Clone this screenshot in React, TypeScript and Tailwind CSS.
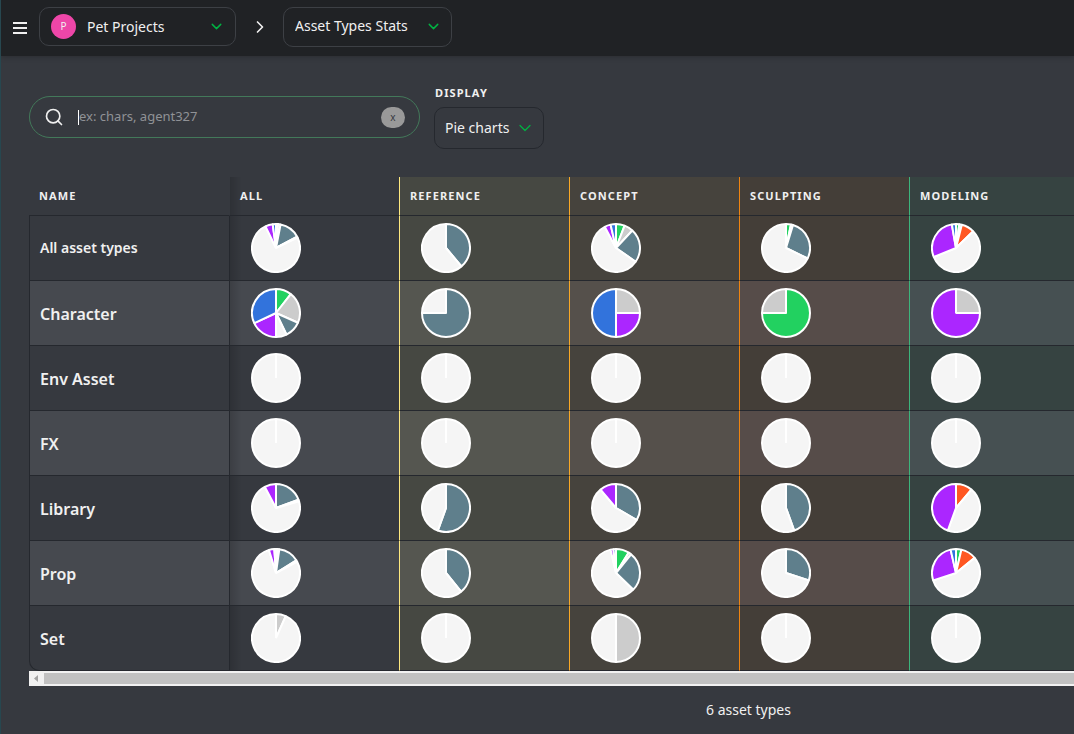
import { ReactNode } from 'react';
import { ChevronDown, ChevronRight, Search } from 'lucide-react';

type Slice = [color: string, degrees: number];

interface Column {
  name: string;
  head: string;
  even: string;
  odd: string;
}

interface Row {
  name: string;
  pies: Slice[][];
}

const GREEN = '#22d160';
const GREY = '#cccccc';
const SLATE = '#5f7f8c';
const ORANGE = '#ff5722';
const TODO = '#f5f5f5';
const PURPLE = '#ab26ff';
const BLUE = '#3273dc';

const EMPTY: Slice[] = [[TODO, 360]];

const columns: Column[] = [
  { name: 'All', head: 'border-transparent', even: 'border-[#25282e]', odd: 'border-[#25282e] bg-[#46494f]' },
  { name: 'Reference', head: 'border-[#ffe97f] bg-[#464842]', even: 'border-[#ffe97f] bg-[#464842]', odd: 'border-[#ffe97f] bg-[#555650]' },
  { name: 'Concept', head: 'border-[#f9a825] bg-[#46433d]', even: 'border-[#f9a825] bg-[#46433d]', odd: 'border-[#f9a825] bg-[#55504b]' },
  { name: 'Sculpting', head: 'border-[#ef8410] bg-[#443e38]', even: 'border-[#ef8410] bg-[#443e38]', odd: 'border-[#ef8410] bg-[#564c49]' },
  { name: 'Modeling', head: 'border-[#3cb57c] bg-[#364341]', even: 'border-[#3cb57c] bg-[#364341]', odd: 'border-[#3cb57c] bg-[#465052]' },
];

const rows: Row[] = [
  {
    name: 'All asset types',
    pies: [
      [[GREEN, 5], [GREY, 6], [SLATE, 51], [ORANGE, 2], [TODO, 270], [PURPLE, 18], [BLUE, 8]],
      [[SLATE, 140], [TODO, 220]],
      [[GREEN, 21], [GREY, 22], [SLATE, 82], [TODO, 207], [PURPLE, 15], [BLUE, 13]],
      [[GREEN, 12], [GREY, 5], [SLATE, 99], [TODO, 244]],
      [[GREEN, 8], [GREY, 6], [ORANGE, 32], [TODO, 202], [PURPLE, 102], [BLUE, 10]],
    ],
  },
  {
    name: 'Character',
    pies: [
      [[GREEN, 38], [GREY, 76], [SLATE, 40], [TODO, 26], [PURPLE, 65], [BLUE, 115]],
      [[SLATE, 270], [TODO, 90]],
      [[GREY, 90], [PURPLE, 90], [BLUE, 180]],
      [[GREEN, 270], [GREY, 90]],
      [[GREY, 90], [PURPLE, 270]],
    ],
  },
  { name: 'Env Asset', pies: [EMPTY, EMPTY, EMPTY, EMPTY, EMPTY] },
  { name: 'FX', pies: [EMPTY, EMPTY, EMPTY, EMPTY, EMPTY] },
  {
    name: 'Library',
    pies: [
      [[SLATE, 70], [ORANGE, 4], [TODO, 258], [PURPLE, 28]],
      [[SLATE, 200], [TODO, 160]],
      [[SLATE, 120], [TODO, 200], [PURPLE, 40]],
      [[SLATE, 160], [TODO, 200]],
      [[ORANGE, 40], [TODO, 160], [PURPLE, 160]],
    ],
  },
  {
    name: 'Prop',
    pies: [
      [[GREEN, 4], [GREY, 4], [SLATE, 50], [ORANGE, 4], [TODO, 281], [PURPLE, 13], [BLUE, 4]],
      [[SLATE, 141], [TODO, 219]],
      [[GREEN, 32], [GREY, 7], [SLATE, 95], [TODO, 213], [PURPLE, 7], [BLUE, 6]],
      [[SLATE, 108], [TODO, 252]],
      [[GREEN, 13], [ORANGE, 38], [TODO, 201], [PURPLE, 95], [BLUE, 13]],
    ],
  },
  {
    name: 'Set',
    pies: [
      [[GREY, 24], [TODO, 336]],
      EMPTY,
      [[GREY, 180], [TODO, 180]],
      EMPTY,
      EMPTY,
    ],
  },
];

function slicePath(start: number, end: number) {
  const point = (deg: number) => {
    const a = (deg * Math.PI) / 180;
    return `${(25 + 24 * Math.sin(a)).toFixed(2)} ${(25 - 24 * Math.cos(a)).toFixed(2)}`;
  };
  // a full turn needs two arcs
  if (end - start >= 360) {
    return `M25 25L${point(0)}A24 24 0 0 1 ${point(180)}A24 24 0 0 1 ${point(360)}Z`;
  }
  return `M25 25L${point(start)}A24 24 0 ${end - start > 180 ? 1 : 0} 1 ${point(end)}Z`;
}

function Pie({ slices }: { slices: Slice[] }) {
  let angle = 0;
  return (
    <svg width="50" height="50" viewBox="0 0 50 50" className="block">
      {slices.map(([color, degrees], i) => {
        const start = angle;
        angle += degrees;
        return (
          <path key={i} d={slicePath(start, angle)} fill={color} stroke="#fff" strokeWidth="2" strokeLinejoin="bevel" />
        );
      })}
    </svg>
  );
}

interface ComboProps {
  label: string;
  value: string;
  className: string;
  thin?: boolean;
  children?: ReactNode;
}

function Combo({ label, value, className, thin, children }: ComboProps) {
  return (
    <div className={`flex items-center rounded-[10px] border ${className}`}>
      {children}
      <select aria-label={label} defaultValue={value} className="min-w-0 flex-1 appearance-none bg-transparent text-sm outline-none">
        <option>{value}</option>
      </select>
      <ChevronDown size={thin ? 20 : 17} strokeWidth={thin ? 1.5 : 2} className="shrink-0 text-[#00b242]" />
    </div>
  );
}

const headText = 'text-left text-[11px] font-bold uppercase tracking-widest';
const shade = 'bg-linear-to-r from-black/15 to-transparent to-[12px]';

export default function App() {
  return (
    <div className="min-h-screen overflow-hidden border-l border-[#27474f] bg-[#36393f] font-['Noto_Sans','Open_Sans',sans-serif] text-[#f0f0f0]">
      <header className="relative flex h-14 items-start bg-[#202225] pt-[7px] pl-3 shadow-[0_0_6px_rgba(0,0,0,0.3)]">
        <button aria-label="Menu" className="mt-[15px] mr-3">
          <svg width="14" height="12" viewBox="0 0 14 12" fill="currentColor" className="block">
            <path d="M0 0h14v2H0zM0 5h14v2H0zM0 10h14v2H0z" />
          </svg>
        </button>
        <Combo label="Project" value="Pet Projects" className="h-[39px] w-[197px] border-[#3d4045] pr-[10px] pl-[11px]">
          <span className="mr-[11px] flex size-[25px] items-center justify-center rounded-full bg-[#ee46a8] text-[10px]">P</span>
        </Combo>
        <ChevronRight size={20} strokeWidth={2} className="mx-[14px] mt-[10px] -mr-px" />
        <Combo label="Section" value="Asset Types Stats" className="ml-[14px] h-10 w-[169px] border-[#3d4045] pb-[2px] pr-[9px] pl-[11px]" />
      </header>

      <main className="w-[1495px] pt-[29px] pl-7">
        <div className="flex items-start gap-[14px]">
          <label className="mt-[11px] flex h-[42px] w-[391px] items-center rounded-full border border-[#43795a] px-[14px]">
            <Search size={20} strokeWidth={2} className="mr-[14px]" />
            <span className="h-[15px] w-px bg-white" />
            <input type="text" aria-label="Search" placeholder="ex: chars, agent327" className="min-w-0 flex-1 bg-transparent text-[13px] outline-none placeholder:text-[#909296]" />
            <button aria-label="Clear search" className="h-[21px] w-6 rounded-full bg-[#999999] text-[10px] leading-4 text-[#36393f]">x</button>
          </label>
          <div>
            <div className={`mb-[7px] pl-px leading-[15px] ${headText}`}>Display</div>
            <Combo thin label="Display" value="Pie charts" className="h-[42px] w-[110px] border-[#25282e] pr-2 pl-[10px]" />
          </div>
        </div>

        <div className="mt-7">
          <table className="w-full table-fixed border-separate border-spacing-0">
            <thead>
              <tr className="h-[39px]">
                <th className={`w-[200px] border-b border-[#25282e] pl-[10px] ${headText}`}>Name</th>
                {columns.map((col, i) => (
                  <th
                    key={col.name}
                    className={`border-l border-b border-b-[#25282e] pl-[10px] ${headText} ${col.head} ${i === 0 ? shade : ''} ${i === columns.length - 1 ? '' : 'w-[170px]'}`}
                  >
                    {col.name}
                  </th>
                ))}
              </tr>
            </thead>
            <tbody>
              {rows.map((row, r) => (
                <tr key={row.name} className="h-[65px]">
                  <th
                    scope="row"
                    className={`border-b border-l border-[#25282e] pl-[10px] text-left font-semibold ${r === 0 ? 'text-sm' : 'pt-[2px] text-base'} ${r % 2 ? 'bg-[#46494f]' : ''} ${r === rows.length - 1 ? 'rounded-bl-[10px]' : ''}`}
                  >
                    {row.name}
                  </th>
                  {row.pies.map((slices, i) => (
                    <td
                      key={i}
                      className={`border-l border-b border-b-[#25282e] pl-[21px] ${r % 2 ? columns[i].odd : columns[i].even} ${i === 0 ? shade : ''}`}
                    >
                      <Pie slices={slices} />
                    </td>
                  ))}
                </tr>
              ))}
            </tbody>
          </table>
          <div className="flex h-[15px] items-center bg-[#f1f1f1]">
            <svg width="15" height="15" viewBox="0 0 15 15">
              <path d="M9 4v7L5 7.500z" fill="#a3a3a3" />
            </svg>
            <div className="h-[11px] flex-1 bg-[#c1c1c1]" />
          </div>
        </div>
        <p className="mt-[14px] pr-7 text-center text-sm">6 asset types</p>
      </main>
    </div>
  );
}
